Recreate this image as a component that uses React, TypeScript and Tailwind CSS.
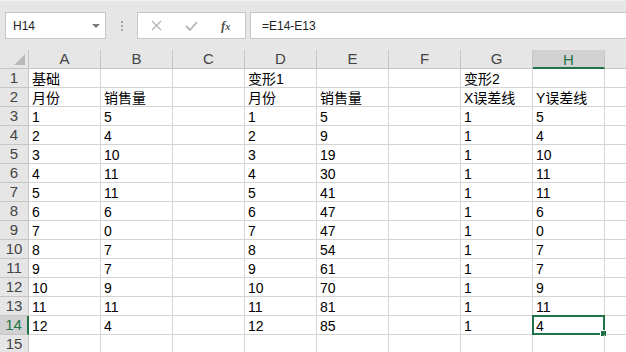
import { Fragment } from 'react';

// Sheet data, keyed by row number; each row lists columns A..H
const rows: string[][] = [
    ['基础', '', '', '变形1', '', '', '变形2', ''],
    ['月份', '销售量', '', '月份', '销售量', '', 'X误差线', 'Y误差线'],
];

const sales = [5, 4, 10, 11, 11, 6, 0, 7, 7, 9, 11, 4];
const cumulative = [5, 9, 19, 30, 41, 47, 47, 54, 61, 70, 81, 85];

sales.forEach((s, i) => {
    rows.push([String(i + 1), String(s), '', String(i + 1), String(cumulative[i]), '', '1', String(s)]);
});
rows.push(['', '', '', '', '', '', '', '']);

const columns = ['A', 'B', 'C', 'D', 'E', 'F', 'G', 'H'];

const font = { fontFamily: '"Liberation Sans", "Noto Sans CJK SC", sans-serif' };

export default function App() {
    return (
        <div className="w-[626px] h-[352px] overflow-hidden bg-white text-black" style={font}>
            {/* Formula bar */}
            <div className="h-[50px] bg-[#e6e6e6] border-t border-[#f2f2f2] pt-[11px] flex">
                <div className="ml-[5px] w-[101px] h-[27px] bg-white border border-[#c6c6c6] flex items-center pl-[7px] pr-[5px]">
                    <span className="text-[12px] text-[#222] flex-1">H14</span>
                    <svg width="8" height="4" viewBox="0 0 8 4">
                        <path d="M0 0 H8 L4 4 Z" fill="#7a7a7a" />
                    </svg>
                </div>
                <div className="w-[31px] h-[27px] flex flex-col items-center justify-center gap-[2px]">
                    <span className="w-[2px] h-[2px] bg-[#a6a6a6]" />
                    <span className="w-[2px] h-[2px] bg-[#a6a6a6]" />
                    <span className="w-[2px] h-[2px] bg-[#a6a6a6]" />
                </div>
                <div className="w-[109px] h-[27px] bg-white border border-[#c6c6c6] flex items-center">
                    <svg className="ml-[13px]" width="11" height="11" viewBox="0 0 11 11">
                        <path d="M1 1 L10 10 M10 1 L1 10" stroke="#b4b4b4" strokeWidth="1.3" fill="none" />
                    </svg>
                    <svg className="ml-[23px]" width="13" height="10" viewBox="0 0 13 10">
                        <path d="M1 5 L5 9 L12 1" stroke="#b4b4b4" strokeWidth="1.8" fill="none" />
                    </svg>
                    <span className="ml-[23px] text-[13px] italic text-[#555] font-bold" style={{ fontFamily: '"Liberation Serif", serif' }}>
                        f<span className="text-[10px]">x</span>
                    </span>
                </div>
                <div className="ml-[4px] flex-1 h-[27px] bg-white border border-[#c6c6c6] border-r-0 flex items-center pl-[11px]">
                    <span className="text-[12px] text-[#222]">=E14-E13</span>
                </div>
            </div>

            {/* Grid */}
            <div className="grid grid-cols-[29px_repeat(8,72px)_1fr] auto-rows-[19px]">
                {/* Column header row */}
                <div className="bg-[#e6e6e6] border-r border-b border-[#c6c6c6] relative">
                    <svg className="absolute right-[3px] bottom-[3px]" width="11" height="11" viewBox="0 0 11 11">
                        <path d="M11 0 V11 H0 Z" fill="#b9b9b9" />
                    </svg>
                </div>
                {columns.map((c) => (
                    <div
                        key={c}
                        className={
                            c === 'H'
                                ? 'bg-[#d2d2d2] border-r border-[#c6c6c6] border-b-2 border-b-[#217346] text-[#217346] text-[15px] leading-[19px] text-center'
                                : 'bg-[#e6e6e6] border-r border-b border-[#c6c6c6] text-[#444] text-[15px] leading-[18px] text-center'
                        }
                    >
                        {c}
                    </div>
                ))}
                <div className="bg-[#e6e6e6] border-b border-[#c6c6c6]" />

                {/* Data rows */}
                {rows.map((row, r) => {
                    const num = r + 1;
                    const active = num === 14;
                    return (
                        <Fragment key={num}>
                            <div
                                className={
                                    active
                                        ? 'bg-[#d2d2d2] border-r-2 border-r-[#217346] border-b border-[#c6c6c6] text-[#217346] text-[15px] leading-[18px] text-center'
                                        : 'bg-[#e6e6e6] border-r border-b border-[#c6c6c6] text-[#444] text-[15px] leading-[18px] text-center'
                                }
                            >
                                {num}
                            </div>
                            {row.map((v, c) => (
                                <div
                                    key={c}
                                    className="relative border-r border-b border-[#d4d4d4] pl-[3px] pt-[2px] text-[14px] leading-[17px] whitespace-nowrap"
                                >
                                    {v}
                                    {active && c === 7 && (
                                        <div className="absolute -left-[1px] -top-[1px] -right-[1px] -bottom-[1px] border-2 border-[#217346]">
                                            <div className="absolute -right-[4px] -bottom-[4px] w-[7px] h-[7px] bg-[#217346] border border-white" />
                                        </div>
                                    )}
                                </div>
                            ))}
                            <div className="border-b border-[#d4d4d4]" />
                        </Fragment>
                    );
                })}
            </div>
        </div>
    );
}
